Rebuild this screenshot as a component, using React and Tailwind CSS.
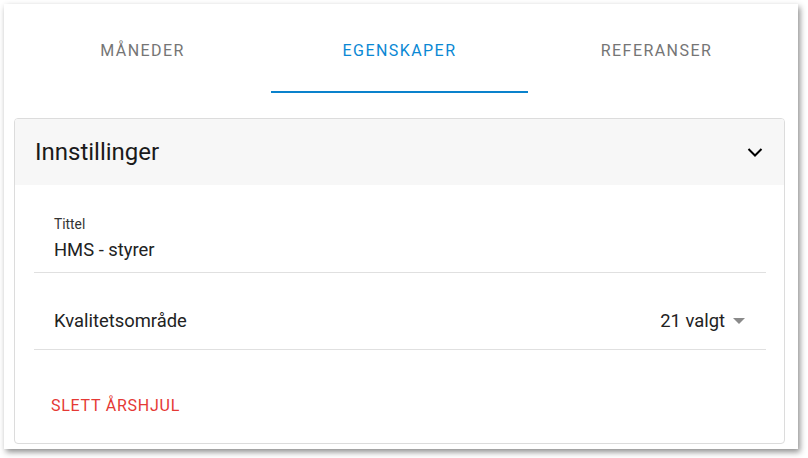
import React, { useState } from "react";

const tabs = ["Måneder", "Egenskaper", "Referanser"];

function Chevron() {
  return (
    <svg width="28" height="28" viewBox="0 0 28 28" className="text-black">
      <path d="M7.5 11 14 17.5 20.5 11" fill="none" stroke="currentColor" strokeWidth="2" />
    </svg>
  );
}

export default function App() {
  const [active, setActive] = useState(1);

  return (
    <div className="w-[808px] h-[458px] bg-white pt-1 pl-1" style={{ fontFamily: "Roboto, 'Liberation Sans', sans-serif" }}>
      <div className="w-[794px] h-[445px] bg-white pl-[10px] pr-[13px] shadow-[2px_3px_6px_rgba(0,0,0,0.45)]">
        {/* Tabs */}
        <div className="flex">
          {tabs.map((t, i) => (
            <button
              key={t}
              onClick={() => setActive(i)}
              className={`flex-1 pt-[37px] pb-[31px] text-[16px] leading-[19px] uppercase tracking-[0.09em] border-b-2 ${
                i === active ? "text-[#0a88d4] border-[#0a82cc]" : "text-[#757575] border-transparent"
              }`}
            >
              {t}
            </button>
          ))}
        </div>

        {/* Card */}
        <div className="mt-[25px] border border-[#dcdcdc] rounded-[4px] overflow-hidden">
          <div className="h-[66px] bg-[#f7f7f7] flex items-center justify-between pl-[20px] pr-[15px]">
            <span className="text-[24px] text-[#1a1a1a]">Innstillinger</span>
            <Chevron />
          </div>

          <div className="pl-[19px] pr-[18px]">
            <div className="pt-[30px] pb-[9px] px-[20px] border-b border-[#e0e0e0]">
              <div className="text-[13.8px] leading-[18px] text-[#333]">Tittel</div>
              <div className="text-[18.4px] leading-[26px] text-[#222] mt-[4px]">HMS - styrer</div>
            </div>

            <div className="pt-[35px] pb-[15px] pl-[20px] pr-[21px] border-b border-[#e0e0e0] flex items-center justify-between">
              <span className="text-[18.4px] leading-[26px] text-[#222]">Kvalitetsområde</span>
              <div className="flex items-center gap-[8px]">
                <span className="text-[18.4px] leading-[26px] text-[#222]">21 valgt</span>
                <svg width="12" height="6" viewBox="0 0 12 6">
                  <path d="M0 0h12L6 6z" fill="#8a8a8a" />
                </svg>
              </div>
            </div>

            <div className="pt-[44px] pb-[25px]">
              <button className="pl-[17px] text-[16px] leading-[22px] uppercase tracking-[0.75px] text-[#e53935]">
                Slett årshjul
              </button>
            </div>
          </div>
        </div>
      </div>
    </div>
  );
}
